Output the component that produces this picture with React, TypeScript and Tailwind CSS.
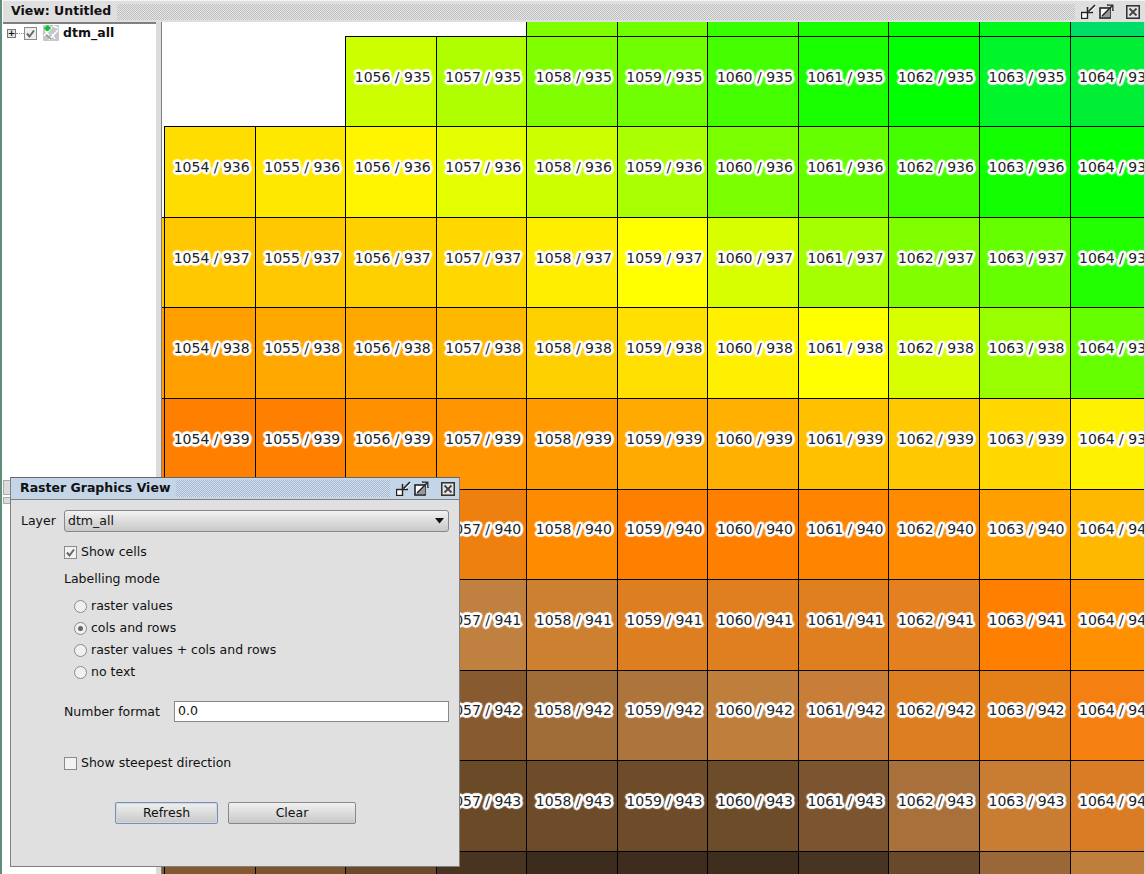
import React from "react";

const cols = ["1053", "1054", "1055", "1056", "1057", "1058", "1059", "1060", "1061", "1062", "1063", "1064"];

const rows: { id: number | null; c: (string | null)[] }[] = [
  { id: null, c: [null, null, null, null, null, "#7fff00", "#70ff00", "#38ff00", "#19ff00", "#00ff00", "#00f81a", "#00dd66"] },
  { id: 935, c: [null, null, null, "#ccff00", "#b0ff00", "#80ff00", "#70ff00", "#44ff00", "#1aff00", "#00ff00", "#00f52a", "#00ee33"] },
  { id: 936, c: [null, "#ffdd00", "#ffe800", "#fff500", "#e6ff00", "#ccff00", "#aaff00", "#7aff00", "#66ff00", "#44ff00", "#11ff00", "#00ff00"] },
  { id: 937, c: ["#ffc800", "#ffc800", "#ffc800", "#ffd000", "#ffd800", "#ffee00", "#ffff00", "#d8ff00", "#a6ff00", "#80ff00", "#66ff00", "#22ff00"] },
  { id: 938, c: ["#ffa000", "#ffa000", "#ffa800", "#ffa800", "#ffb800", "#ffd000", "#ffe000", "#fff000", "#ffff00", "#d8ff00", "#99ff00", "#66ff00"] },
  { id: 939, c: ["#ff8000", "#ff8000", "#ff8000", "#ff9000", "#ff9500", "#ff9a00", "#ffaa00", "#ffb000", "#ffc000", "#ffc800", "#ffd800", "#fff200"] },
  { id: 940, c: ["#ee8010", "#ee8010", "#ee8010", "#ee8010", "#ee8010", "#ff8c00", "#ff8000", "#ff8000", "#ff8400", "#ff8c00", "#ffa000", "#ffb800"] },
  { id: 941, c: ["#c08040", "#c08040", "#c08040", "#c08040", "#c08040", "#cc8030", "#dd7f20", "#e07f20", "#e07f20", "#e58020", "#ff8000", "#ff9000"] },
  { id: 942, c: ["#885a30", "#885a30", "#885a30", "#885a30", "#885a30", "#a06c38", "#ad743c", "#c07e3c", "#c87e38", "#dd7f20", "#e58018", "#f57f10"] },
  { id: 943, c: ["#6b4a28", "#85592f", "#85592f", "#85592f", "#6b4a28", "#6e4c29", "#6e4c29", "#6d4c2a", "#7c5530", "#a8703b", "#c87d33", "#d97c25"] },
  { id: null, c: ["#85592f", "#85592f", "#7a5530", "#6a4a2a", "#483420", "#3b2c1e", "#3e2d1e", "#3e2e1e", "#483422", "#684a2a", "#9a6838", "#c07e3c"] },
];

function FloatIcon() {
  return (
    <svg width="15" height="15" viewBox="0 0 15 15" className="shrink-0">
      <rect x="0.5" y="8.5" width="6" height="6" fill="#fff" stroke="#222" strokeWidth="1.4" />
      <path d="M14 1 L7.5 7.5" stroke="#222" strokeWidth="1.6" fill="none" />
      <path d="M6.5 3 V8.5 H12" stroke="#222" strokeWidth="1.5" fill="none" />
      <path d="M15 2 L9 8" stroke="#fff" strokeWidth="1" fill="none" />
    </svg>
  );
}

function MaxIcon() {
  return (
    <svg width="15" height="15" viewBox="0 0 15 15" className="shrink-0">
      <rect x="1" y="4" width="10" height="10" fill="#fff" stroke="#222" strokeWidth="1.6" />
      <path d="M2 13 L11 4 V13 Z" fill="#999" />
      <path d="M3 12 L13.5 1.5" stroke="#222" strokeWidth="1.5" fill="none" />
      <path d="M8 1 H14 V7" stroke="#222" strokeWidth="1.5" fill="none" />
      <path d="M9 0 H15 V6" stroke="#fff" strokeWidth="0.6" fill="none" />
    </svg>
  );
}

function CloseIcon() {
  return (
    <svg width="14" height="14" viewBox="0 0 14 14" className="shrink-0">
      <rect x="0.75" y="0.75" width="12.5" height="12.5" fill="#d4d4d4" stroke="#333" strokeWidth="1.5" />
      <rect x="2" y="2" width="10" height="10" fill="#e4e4e4" />
      <path d="M3.5 3.5 L10.5 10.5 M10.5 3.5 L3.5 10.5" stroke="#444" strokeWidth="1.8" />
    </svg>
  );
}

function Check({ on, muted }: { on: boolean; muted?: boolean }) {
  return (
    <span className={"flex h-[13px] w-[13px] shrink-0 items-center justify-center border border-[#8a8a8a] " + (muted ? "bg-[#efefef]" : "bg-[#f2f2f2]")}>
      {on && (
        <svg width="11" height="11" viewBox="0 0 11 11">
          <path d="M2 5.5 L4.5 8.5 L9 2.5" stroke="#666" strokeWidth="2" fill="none" />
        </svg>
      )}
    </span>
  );
}

function Radio({ on, label }: { on?: boolean; label: string }) {
  return (
    <div className="flex h-[22px] items-center">
      <span className="flex h-[13px] w-[13px] shrink-0 items-center justify-center rounded-full border border-[#8a8a8a] bg-[#f0f0f0]">
        {on && <span className="h-[5px] w-[5px] rounded-full bg-[#666]" />}
      </span>
      <span className="ml-[4px]">{label}</span>
    </div>
  );
}

function RasterIcon() {
  return (
    <svg width="16" height="16" viewBox="0 0 16 16" className="shrink-0">
      <rect x="0" y="0" width="16" height="16" rx="1" fill="#c4c8c8" />
      <path d="M1 11 L9 2 M6 15 L15 5 M10 1 L15 3 M2 6 L6 10 M9 9 L12 14" stroke="#fff" strokeWidth="1.4" fill="none" />
      <path d="M3 10 L8 14" stroke="#8a8f8f" strokeWidth="1.2" fill="none" />
      <rect x="1.5" y="2" width="6" height="2.5" fill="#00c81e" />
      <rect x="3.2" y="0.5" width="2.5" height="5.5" fill="#00c81e" />
    </svg>
  );
}

const halo =
  "[text-shadow:2px_0_0_#fff,-2px_0_0_#fff,0_2px_0_#fff,0_-2px_0_#fff,1px_1px_0_#fff,-1px_1px_0_#fff,1px_-1px_0_#fff,-1px_-1px_0_#fff,2px_1px_0_#fff,-2px_1px_0_#fff,2px_-1px_0_#fff,-2px_-1px_0_#fff,1px_2px_0_#fff,-1px_2px_0_#fff,1px_-2px_0_#fff,-1px_-2px_0_#fff,2px_2px_1px_#fff,-2px_2px_1px_#fff,2px_-2px_1px_#fff,-2px_-2px_1px_#fff,3px_0_1px_#fff,-3px_0_1px_#fff,0_3px_1px_#fff,0_-3px_1px_#fff]";

function Cell({ color, col, row, first }: { color: string | null; col: string; row: number | null; first: boolean }) {
  if (!color) return <div className="bg-white" />;
  const strip = col === "1053";
  return (
    <div
      className={
        "box-border flex items-center overflow-hidden border-black pb-[9px] pl-[8.5px] text-[14px] whitespace-nowrap text-[#222] " +
        (first ? "" : "border-t ") +
        (strip ? "" : "border-l")
      }
      style={{ backgroundColor: color }}
    >
      {row !== null && !strip && (
        <span className={halo}>
          {col} / {row}
        </span>
      )}
    </div>
  );
}

export default function App() {
  return (
    <div className="relative flex h-[874px] w-[1145px] overflow-hidden bg-[#dfdfdf] font-['DejaVu_Sans',sans-serif] text-[12.5px] text-[#111]">
      <div className="w-[2px] shrink-0 bg-[#5f8f7c]" />
      <div className="w-[1px] shrink-0 bg-white" />
      <div className="flex min-w-0 flex-1 flex-col">
        <div className="box-border flex h-[22px] shrink-0 items-center border-t border-[#f4f4f4] pl-[8px]">
          <span className="w-[106px] font-bold">View: Untitled</span>
          <div className="h-[16px] w-[958px] bg-[repeating-conic-gradient(#bdbdbd_0_25%,#e8e8e8_0_50%)] bg-[length:2px_2px]" />
          <div className="ml-[6px] flex items-center">
            <FloatIcon />
            <span className="w-[3px]" />
            <MaxIcon />
            <span className="w-[12px]" />
            <CloseIcon />
          </div>
        </div>

        <div className="flex min-h-0 flex-1">
          <div className="flex w-[153px] shrink-0 flex-col border-t-2 border-[#808080] bg-white">
            <div className="mt-[1px] flex h-[16px] items-center pl-[4px]">
              <span className="flex h-[9px] w-[9px] shrink-0 items-center justify-center border border-[#777] bg-[#e4e4e4] text-[9px] leading-none font-bold">+</span>
              <span className="w-[8px] border-t border-dotted border-[#888]" />
              <Check on muted />
              <span className="w-[6px]" />
              <RasterIcon />
              <span className="mt-[1px] ml-[4px] font-bold">dtm_all</span>
            </div>
            <div className="h-[439px]" />
            <div className="h-[15px] w-[8px] border border-[#aaa] bg-[#dcdcdc]" />
            <div className="mt-[2px] h-[7px] w-[8px] border border-[#aaa] bg-[#dcdcdc]" />
            <div className="flex-1" />
          </div>
          <div className="w-[5px] shrink-0 bg-[#dcdcdc]" />
          <div className="w-[1px] shrink-0 bg-[#808080]" />
          <div className="grid min-w-0 flex-1 grid-cols-[2.2px_repeat(10,90.54px)_74px] grid-rows-[13.8px_repeat(9,90.55px)_23px] overflow-hidden border-r border-[#d0d0d0] bg-white">
            {rows.map((r, ri) =>
              r.c.map((color, ci) => (
                <Cell key={ri + "-" + ci} color={color} col={cols[ci]} row={r.id} first={ri === 0} />
              ))
            )}
          </div>
        </div>
      </div>

      {/* floating dialog window */}
      <div className="absolute top-[477px] left-[10px] flex h-[390px] w-[450px] flex-col border border-[#808080] border-t-[#666] bg-[#e0e0e0]">
        <div className="flex h-[22px] shrink-0 items-center border-b border-[#808080] bg-[#c5d5e8] pl-[9px]">
          <span className="w-[156px] font-bold whitespace-nowrap">Raster Graphics View</span>
          <div className="h-[17px] w-[214px] bg-[repeating-conic-gradient(#a8b8ce_0_25%,#d2dfee_0_50%)] bg-[length:2px_2px]" />
          <div className="ml-[6px] flex items-center">
            <FloatIcon />
            <span className="w-[3px]" />
            <MaxIcon />
            <span className="w-[12px]" />
            <CloseIcon />
          </div>
        </div>

        <div className="flex flex-col pt-[10px]">
          <div className="flex h-[22px] items-center pl-[10px]">
            <span className="w-[43px]">Layer</span>
            <div className="flex h-[22px] w-[385px] items-center justify-between rounded-[3px] border border-[#888] bg-gradient-to-b from-[#f2f2f2] to-[#c8c8c8] pr-[3px] pl-[3px]">
              <span>dtm_all</span>
              <svg width="11" height="6" viewBox="0 0 11 6"><path d="M1 0 H10 L5.5 5.5 Z" fill="#111" /></svg>
            </div>
          </div>

          <div className="mt-[9px] flex h-[22px] items-center pl-[53px]">
            <Check on />
            <span className="ml-[4px]">Show cells</span>
          </div>

          <div className="mt-[5px] flex h-[22px] items-center pl-[53px]">Labelling mode</div>

          <div className="mt-[5px] flex flex-col pl-[63px]">
            <Radio label="raster values" />
            <Radio on label="cols and rows" />
            <Radio label="raster values + cols and rows" />
            <Radio label="no text" />
          </div>

          <div className="mt-[18px] flex h-[21px] items-center pl-[53px]">
            <span className="mt-[1px] w-[110px]">Number format</span>
            <div className="flex h-[21px] w-[275px] items-center border border-[#888] bg-white pl-[3px]">0.0</div>
          </div>

          <div className="mt-[30px] flex h-[22px] items-center pl-[53px]">
            <Check on={false} />
            <span className="ml-[4px]">Show steepest direction</span>
          </div>

          <div className="mt-[28px] flex pl-[104px]">
            <button className="h-[22px] w-[103px] rounded-[2px] border border-[#7f8fa8] bg-gradient-to-b from-[#f0f0f0] to-[#c8c8c8] shadow-[inset_0_0_0_1px_#c8d8f0]">Refresh</button>
            <button className="ml-[10px] h-[22px] w-[128px] rounded-[2px] border border-[#888] bg-gradient-to-b from-[#f0f0f0] to-[#c8c8c8]">Clear</button>
          </div>
        </div>
      </div>
    </div>
  );
}
